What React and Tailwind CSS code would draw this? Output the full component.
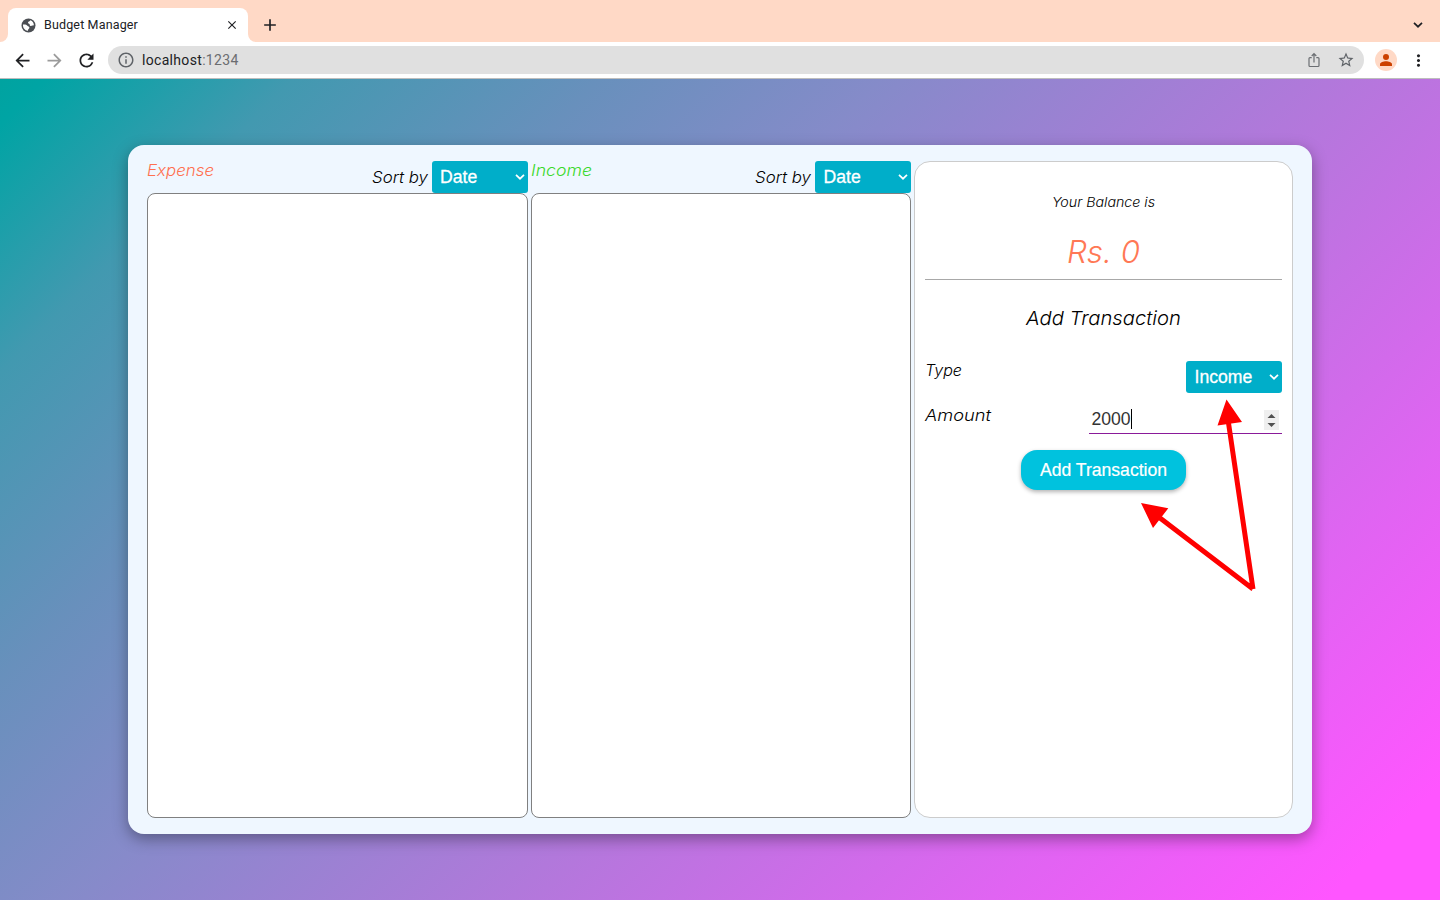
import { MdArrowBack, MdArrowForward, MdRefresh, MdInfoOutline, MdStarBorder, MdMoreVert, MdClose, MdAdd } from "react-icons/md";

const display = "font-['Inter','Liberation_Sans',sans-serif] italic font-light";

function Chevron({ className }) {
  return (
    <svg className={className} viewBox="0 0 10 6" fill="none" stroke="currentColor" strokeWidth="1.7">
      <path d="M1 0.8 L5 4.7 L9 0.8" />
    </svg>
  );
}

function Globe() {
  return (
    <svg width="15" height="15" viewBox="0 0 15 15">
      <circle cx="7.500" cy="7.500" r="7" fill="#4b4e53" />
      <path
        d="M9.300 2.200C8.900 3.600 7.200 3.100 7 4.500C6.900 5.600 8 5.300 8.500 6.100C9 7 8.300 7.500 9.500 7.900C10.700 8.200 11 7.400 12.900 7.300C12.900 5 11.700 2.900 9.300 2.200ZM2 6.600C3.700 6.300 5.700 6.700 6.400 7.700C7 8.600 8.500 8.400 8.400 9.800C8.200 11 7 10.900 6.700 12.900C4 12.500 1.700 10.100 2 6.600Z"
        fill="white"
      />
    </svg>
  );
}

function Select({ label }) {
  return (
    <div className="flex h-8 w-24 shrink-0 items-center justify-between rounded-[3px] bg-[#00aec9] pr-[3px] pl-[8.500px] text-white">
      <span className="text-[17.6px] leading-8 [-webkit-text-stroke:0.3px_white]">{label}</span>
      <Chevron className="h-[6px] w-[10px]" />
    </div>
  );
}

function Label({ children, width, className = "", size = "text-[16px]", baseline = 16 }) {
  return (
    <svg width={width} height="24" className={`${display} block shrink-0 overflow-visible ${size} ${className}`}>
      <text x="0" y={baseline} fill="currentColor" textLength={width} lengthAdjust="spacingAndGlyphs">{children}</text>
    </svg>
  );
}

function Column({ title, width, color }) {
  return (
    <section className="flex w-[380.5px] flex-col">
      <div className="flex h-8 justify-between">
        <Label width={width} className={color} baseline={15}>{title}</Label>
        <div className="flex items-start gap-1">
          <Label width={56} className="mt-[6px] text-black">Sort by</Label>
          <Select label="Date" />
        </div>
      </div>
      <div className="flex-1 rounded-lg border border-[#808080] bg-white" />
    </section>
  );
}

export default function App() {
  return (
    <div className="relative flex h-[900px] w-[1440px] flex-col overflow-hidden font-['Liberation_Sans',sans-serif]">
      <header className="flex h-[79px] shrink-0 flex-col border-b border-[#bdbdbd] bg-white">
        <div className="flex h-[42px] shrink-0 bg-[#ffd9c6]">
          <div className="flex w-2 bg-[linear-gradient(#ffd9c6_50%,white_50%)]">
            <div className="h-full w-2 rounded-br-lg bg-[#ffd9c6]" />
          </div>
          <div className="flex w-60 flex-col">
            <div className="mt-2 flex h-[34px] items-center rounded-t-lg bg-white pr-[9px] pl-[12.5px]">
              <Globe />
              <span className="ml-[8.500px] flex-1 font-['Roboto',sans-serif] text-[12.5px] tracking-[0.15px] text-[#202124]">Budget Manager</span>
              <MdClose className="h-[14px] w-[14px] text-[#202124]" />
            </div>
          </div>
          <div className="w-2 bg-[linear-gradient(#ffd9c6_50%,white_50%)]"><div className="h-full w-2 rounded-bl-lg bg-[#ffd9c6]" /></div>
          <div className="flex flex-1 items-center justify-between pt-2 pr-[17px] pl-1">
            <MdAdd className="h-5 w-5 text-[#202124]" />
            <Chevron className="h-[6px] w-[10px] text-[#202124]" />
          </div>
        </div>
        <div className="flex h-9 items-center pl-[11.5px]">
          <MdArrowBack className="h-[21px] w-[21px] text-[#202124]" />
          <MdArrowForward className="ml-[11px] h-[21px] w-[21px] text-[#9b9b9b]" />
          <MdRefresh className="ml-[11px] h-[21px] w-[21px] text-[#202124]" />
          <div className="ml-[11.5px] flex h-7 w-[1256px] items-center rounded-full bg-[#e0e0e0] px-[9px]">
            <MdInfoOutline className="h-[18px] w-[18px] text-[#5f6368]" />
            <span className="ml-[7px] flex-1 font-['Roboto',sans-serif] text-[14px] tracking-[0.32px] text-[#202124]">localhost<span className="text-[#6b6d70]">:1234</span></span>
            <svg className="h-4 w-4 text-[#6b6e72]" viewBox="0 0 16 16" fill="none" stroke="currentColor" strokeWidth="1.2">
              <path d="M5.700 5.600H4q-1 0-1 1V13.500q0 1 1 1h8q1 0 1-1V6.600q0-1-1-1h-1.700M8 10.500V2M5.700 4L8 1.700L10.300 4" />
            </svg>
            <MdStarBorder className="ml-[15px] h-[18px] w-[18px] text-[#5f6368]" />
          </div>
          <div className="ml-[11px] flex h-[22px] w-[22px] items-center justify-center rounded-full bg-[#ffd9c6]">
            <svg width="12" height="12" viewBox="0 0 12 12" fill="#cc4100">
              <circle cx="6" cy="3" r="3" />
              <path d="M0 12V10.300C0 8.300 3.500 7.300 6 7.300S12 8.300 12 10.300V12Z" />
            </svg>
          </div>
          <MdMoreVert className="ml-3 h-[19px] w-[19px] text-[#202124]" />
        </div>
      </header>

      <main className="flex flex-1 justify-center bg-[linear-gradient(135deg,#00a3a0_0%,#00a4a4_2%,#4299b0_13%,#6890bc_26.5%,#858bc9_39%,#9285cf_45%,#b477dc_60%,#e064f2_80%,#ff55ff_95%)] pt-[66px]">
        <div className="flex h-[689px] w-[1184px] gap-[3px] rounded-2xl bg-[#eff7ff] px-[19px] py-4 shadow-[0_5px_15px_rgba(0,0,0,0.35)]">
          <Column title="Expense" width={67} color="text-[#ff7050]" />
          <Column title="Income" width={61} color="text-[#3bd92b]" />
          <section className="flex flex-1 flex-col items-center rounded-2xl border border-[#ccc] bg-white px-[10px]">
            <Label width={103} className="mt-[29px] text-black" size="text-[13.3px]">Your Balance is</Label>
            <div className="mt-[18px] flex h-[47px] w-full justify-center border-b border-[#a8a8a8]">
              <svg width="73" height="42" className={`${display} overflow-visible text-[31px] text-[#ff7855]`}>
                <text x="0" y="30" fill="currentColor" textLength="73" lengthAdjust="spacingAndGlyphs">Rs. 0</text>
              </svg>
            </div>
            <Label width={155} className="mt-[29px] text-black" size="text-[18.7px]">Add Transaction</Label>
            <div className="mt-[28px] flex w-full justify-between">
              <Label width={37} className="text-black" baseline={15}>Type</Label>
              <Select label="Income" />
            </div>
            <div className="mt-[13px] flex w-full justify-between">
              <Label width={66} className="-mt-px text-black">Amount</Label>
              <div className="flex h-7 w-[193px] items-center justify-between border-b border-[#8a1a9a] pr-[3px] pl-[2.5px]">
                <span className="flex items-center text-[17.6px] text-[#333]">2000<i className="h-5 w-px bg-black" /></span>
                <svg width="15" height="20" viewBox="0 0 15 20"><path fill="#efefef" d="M0 0h15v20H0z" /><path fill="#505050" d="M3.500 8h8L7.500 4zM3.500 13h8l-4 4z" /></svg>
              </div>
            </div>
            <button className="mt-4 h-10 w-[165px] rounded-2xl bg-[#00c2de] text-[17.6px] text-white shadow-[0_2px_4px_rgba(0,0,0,0.3)] [-webkit-text-stroke:0.2px_white]">Add Transaction</button>
          </section>
        </div>
      </main>

      <svg className="absolute top-[390px] left-[1130px]" width="140" height="210">
        <path d="M123 199 L98.5 33M123 199 L30 128" stroke="red" strokeWidth="5" fill="none" />
        <path d="M96.500 9.500 L112 32 L87.500 35.500ZM11 113 L38.300 118.300 L23 138Z" fill="red" />
      </svg>
    </div>
  );
}
